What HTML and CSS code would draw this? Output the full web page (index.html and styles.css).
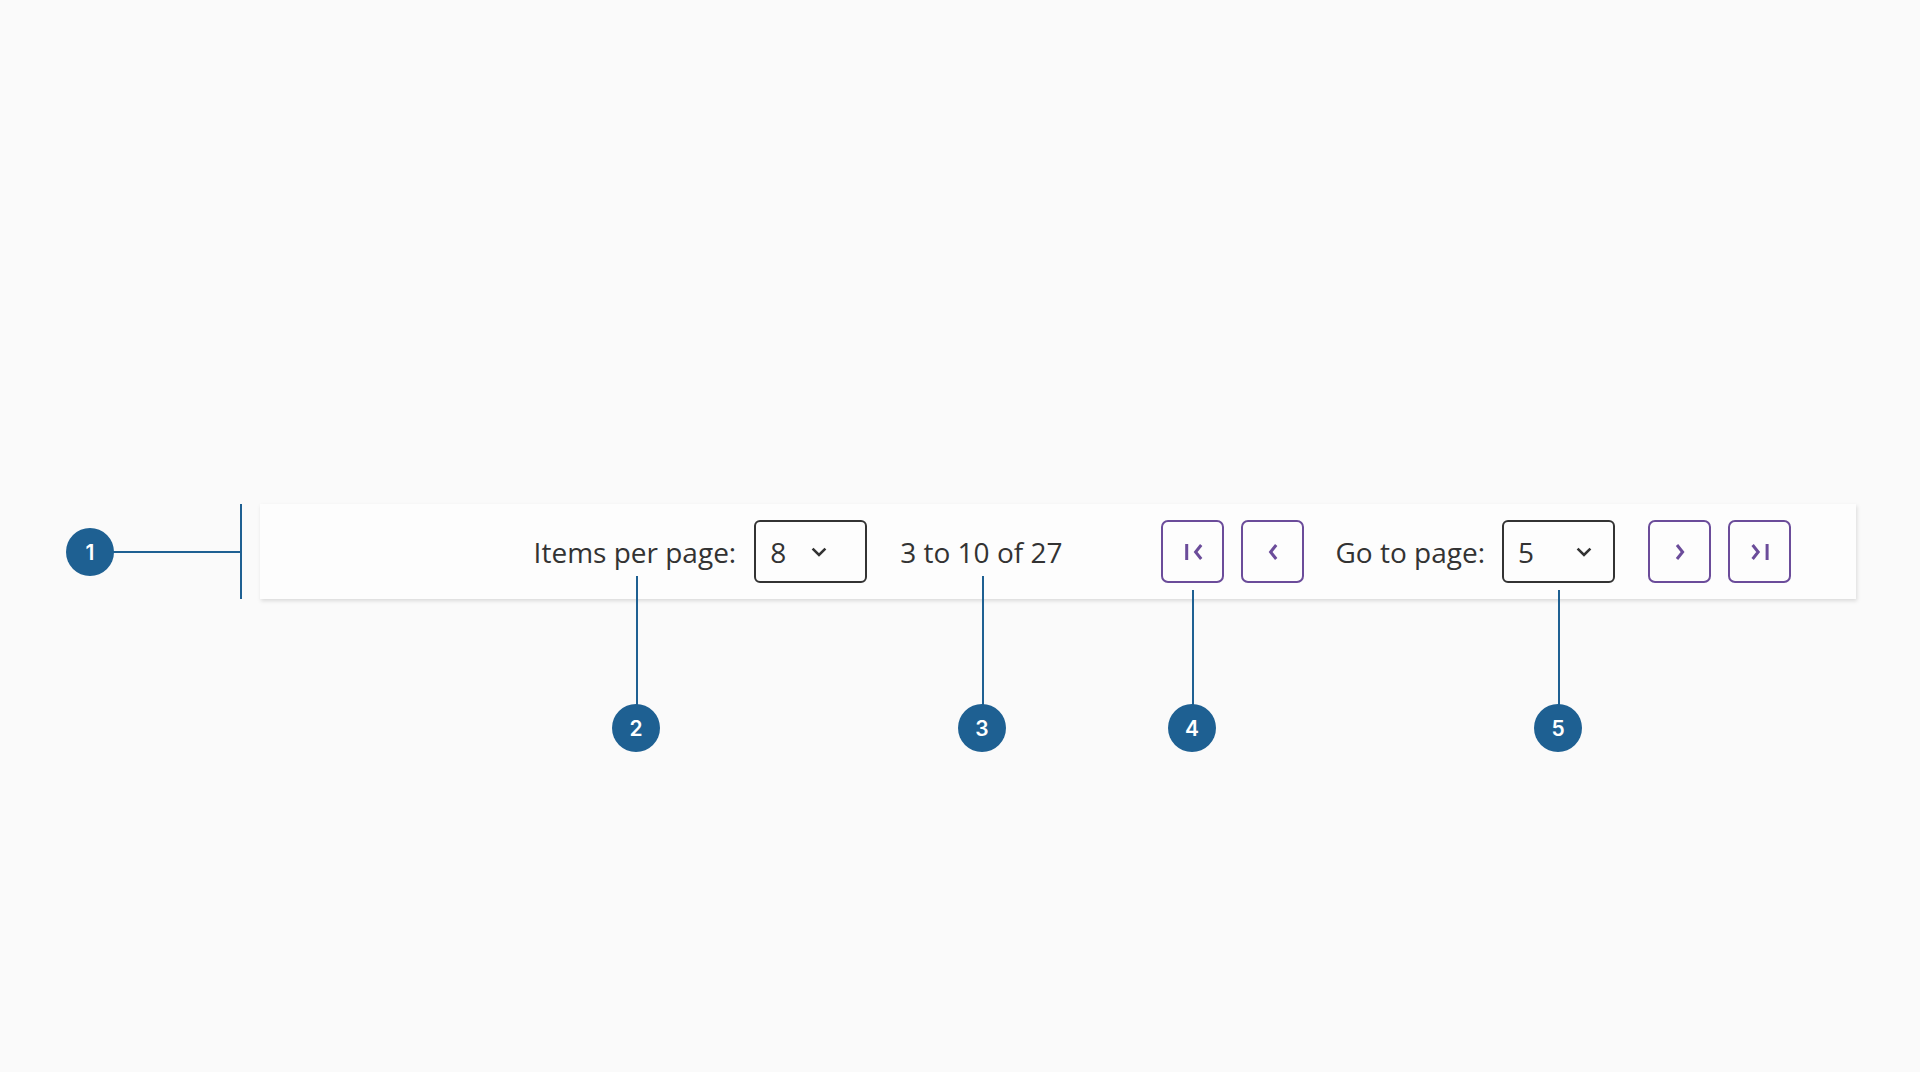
FILE: index.html
```html
<!DOCTYPE html>
<html lang="en">
<head>
<meta charset="utf-8">
<title>Pagination anatomy</title>
<link rel="stylesheet" href="styles.css">
</head>
<body>
<div class="stage">
  <div class="bar">
    <span class="label">Items per page:</span>
    <div class="select select-items">
      <span class="value">8</span>
      <svg class="chev" width="16" height="10" viewBox="0 0 16 10"><path d="M1.6 1.6 L8 8 L14.4 1.6" fill="none" stroke="#333" stroke-width="2.6"/></svg>
    </div>
    <span class="range">3 to 10 of 27</span>
    <div class="nav-group nav-left">
      <button class="nav" aria-label="First page">
        <svg width="24" height="24" viewBox="0 0 24 24"><rect x="4.2" y="4" width="3" height="16" fill="#6b4c9a"/><path d="M20.2 5 L14.6 12 L20.2 19" fill="none" stroke="#6b4c9a" stroke-width="3"/></svg>
      </button>
      <button class="nav" aria-label="Previous page">
        <svg width="24" height="24" viewBox="0 0 24 24"><path d="M15.2 5 L9.6 12 L15.2 19" fill="none" stroke="#6b4c9a" stroke-width="3"/></svg>
      </button>
    </div>
    <span class="label label-go">Go to page:</span>
    <div class="select select-page">
      <span class="value">5</span>
      <svg class="chev" width="16" height="10" viewBox="0 0 16 10"><path d="M1.6 1.6 L8 8 L14.4 1.6" fill="none" stroke="#333" stroke-width="2.6"/></svg>
    </div>
    <div class="nav-group nav-right">
      <button class="nav" aria-label="Next page">
        <svg width="24" height="24" viewBox="0 0 24 24"><path d="M9 5 L14.6 12 L9 19" fill="none" stroke="#6b4c9a" stroke-width="3"/></svg>
      </button>
      <button class="nav" aria-label="Last page">
        <svg width="24" height="24" viewBox="0 0 24 24"><path d="M4.6 5 L10.2 12 L4.6 19" fill="none" stroke="#6b4c9a" stroke-width="3"/><rect x="17.6" y="4" width="3" height="16" fill="#6b4c9a"/></svg>
      </button>
    </div>
  </div>

  <div class="ann-h ann-h1"></div>
  <div class="ann-v ann-v1"></div>
  <div class="marker m1">1</div>

  <div class="leader l2"></div>
  <div class="leader l3"></div>
  <div class="leader l4"></div>
  <div class="leader l5"></div>
  <div class="marker m2">2</div>
  <div class="marker m3">3</div>
  <div class="marker m4">4</div>
  <div class="marker m5">5</div>
</div>
</body>
</html>
```

FILE: styles.css
```css
* { box-sizing: border-box; }
html, body { margin: 0; padding: 0; }
body {
  background: #fafafa;
  font-family: "Open Sans", "Noto Sans", sans-serif;
  color: #333;
}
.stage {
  position: relative;
  width: 1920px;
  height: 1072px;
  padding-top: 504px;
  padding-left: 260px;
}
.bar {
  width: 1596px;
  height: 95px;
  background: #fdfdfd;
  box-shadow: 1px 2px 4px rgba(0,0,0,0.13);
  display: flex;
  align-items: center;
  justify-content: flex-end;
  padding-right: 65px;
}
.label, .range {
  font-size: 28px;
  color: #333;
  white-space: nowrap;
}
.label { margin-right: 18px; }
.label-go { margin-right: 17px; }
.range { margin-left: 33px; margin-right: 99px; }
.select {
  width: 113px;
  height: 63px;
  border: 2px solid #333;
  border-radius: 6px;
  display: flex;
  align-items: center;
  padding-left: 14px;
  font-size: 28px;
  color: #333;
}
.select .chev { margin-left: auto; display: block; }
.select-items { padding-right: 38px; }
.select-page { padding-right: 21px; }
.nav-group { display: flex; gap: 17px; }
.nav-left { margin-right: 31px; }
.nav-right { margin-left: 33px; }
.nav {
  width: 63px;
  height: 63px;
  border: 2px solid #6b4c9a;
  border-radius: 7px;
  background: transparent;
  padding: 0;
  display: flex;
  align-items: center;
  justify-content: center;
}
.nav svg { display: block; }

.marker {
  position: absolute;
  width: 48px;
  height: 48px;
  border-radius: 50%;
  background: #1e6092;
  color: #fff;
  font-family: Inter, Roboto, sans-serif;
  font-weight: 600;
  font-size: 21px;
  display: flex;
  align-items: center;
  justify-content: center;
}
.m1 { left: 66px; top: 528px; }
.m2 { left: 612px; top: 704px; }
.m3 { left: 958px; top: 704px; }
.m4 { left: 1168px; top: 704px; }
.m5 { left: 1534px; top: 704px; }

.ann-h { position: absolute; height: 2px; background: #1e6092; }
.ann-h1 { left: 110px; width: 132px; top: 551px; }
.ann-v { position: absolute; width: 2px; background: #1e6092; }
.ann-v1 { left: 240px; top: 504px; height: 95px; }

.leader { position: absolute; width: 2px; background: #1e6092; }
.l2 { left: 636px; top: 576px; height: 130px; }
.l3 { left: 982px; top: 576px; height: 130px; }
.l4 { left: 1192px; top: 590px; height: 116px; }
.l5 { left: 1558px; top: 590px; height: 116px; }
```
